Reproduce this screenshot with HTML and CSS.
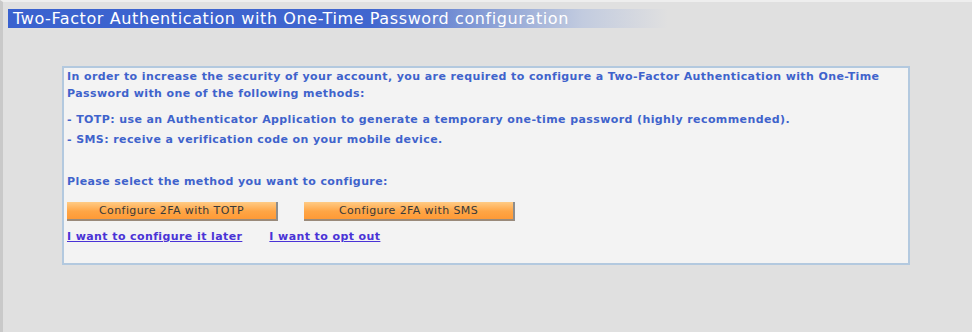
FILE: index.html
```html
<!DOCTYPE html>
<html>
<head>
<meta charset="utf-8">
<link rel="stylesheet" href="styles.css">
</head>
<body>
<div class="page">
  <div class="title-bar"><span class="title">Two-Factor Authentication with One-Time Password configuration</span></div>
  <div class="box">
    <p class="intro">In order to increase the security of your account, you are required to configure a Two-Factor Authentication with One-Time Password with one of the following methods:</p>
    <p class="method first">- TOTP: use an Authenticator Application to generate a temporary one-time password (highly recommended).</p>
    <p class="method">- SMS: receive a verification code on your mobile device.</p>
    <p class="select">Please select the method you want to configure:</p>
    <div class="buttons">
      <button class="btn">Configure 2FA with TOTP</button>
      <button class="btn">Configure 2FA with SMS</button>
    </div>
    <div class="links">
      <a href="#" class="link">I want to configure it later</a>
      <a href="#" class="link">I want to opt out</a>
    </div>
  </div>
</div>
</body>
</html>
```

FILE: styles.css
```css
html, body {
  margin: 0;
  padding: 0;
  background: #e0e0e0;
}
.page {
  width: 972px;
  height: 332px;
  box-sizing: border-box;
  border-top: 2px solid #eeeeee;
  border-left: 3px solid #c9c9c9;
  padding-top: 7px;
  padding-left: 5px;
  font-family: "DejaVu Sans", Verdana, sans-serif;
}
.title-bar {
  width: 660px;
  height: 19px;
  background: linear-gradient(to right, #3a62cf 0%, #4066cf 55%, #8ea3d6 74%, #c2cbdf 87%, #e0e0e0 100%);
  display: flex;
  align-items: center;
}
.title {
  color: #ffffff;
  font-size: 16px;
  padding-left: 5px;
  white-space: nowrap;
  letter-spacing: 0.6px;
}
.box {
  margin-top: 38px;
  margin-left: 54px;
  width: 848px;
  height: 199px;
  box-sizing: border-box;
  border: 2px solid #b3c9df;
  background: #f3f3f3;
  padding: 0 3px 0 3px;
  color: #3f63cc;
  font-size: 11px;
  font-weight: bold;
  letter-spacing: 0.4px;
}
.box p {
  margin: 0;
  line-height: 17px;
}
.method.first {
  margin-top: 8px;
}
.box .method {
  line-height: 20px;
}
.box .select {
  margin-top: 23px;
}
.buttons {
  display: flex;
  gap: 26px;
  margin-top: 12px;
}
.btn {
  width: 211px;
  height: 19px;
  padding: 0;
  border: none;
  border-right: 2px solid #8d8d8d;
  border-bottom: 2px solid #9a8a7a;
  background: linear-gradient(to bottom, #ffcb85 0%, #ffa545 55%, #ff9a36 100%);
  color: #3a3a3a;
  font-family: "DejaVu Sans", Verdana, sans-serif;
  font-size: 11px;
  font-weight: normal;
  letter-spacing: 0.4px;
}
.links {
  display: flex;
  gap: 27px;
  margin-top: 9px;
}
.link {
  color: #4a33d6;
  font-weight: bold;
  font-size: 11px;
  text-decoration: underline;
}
```
